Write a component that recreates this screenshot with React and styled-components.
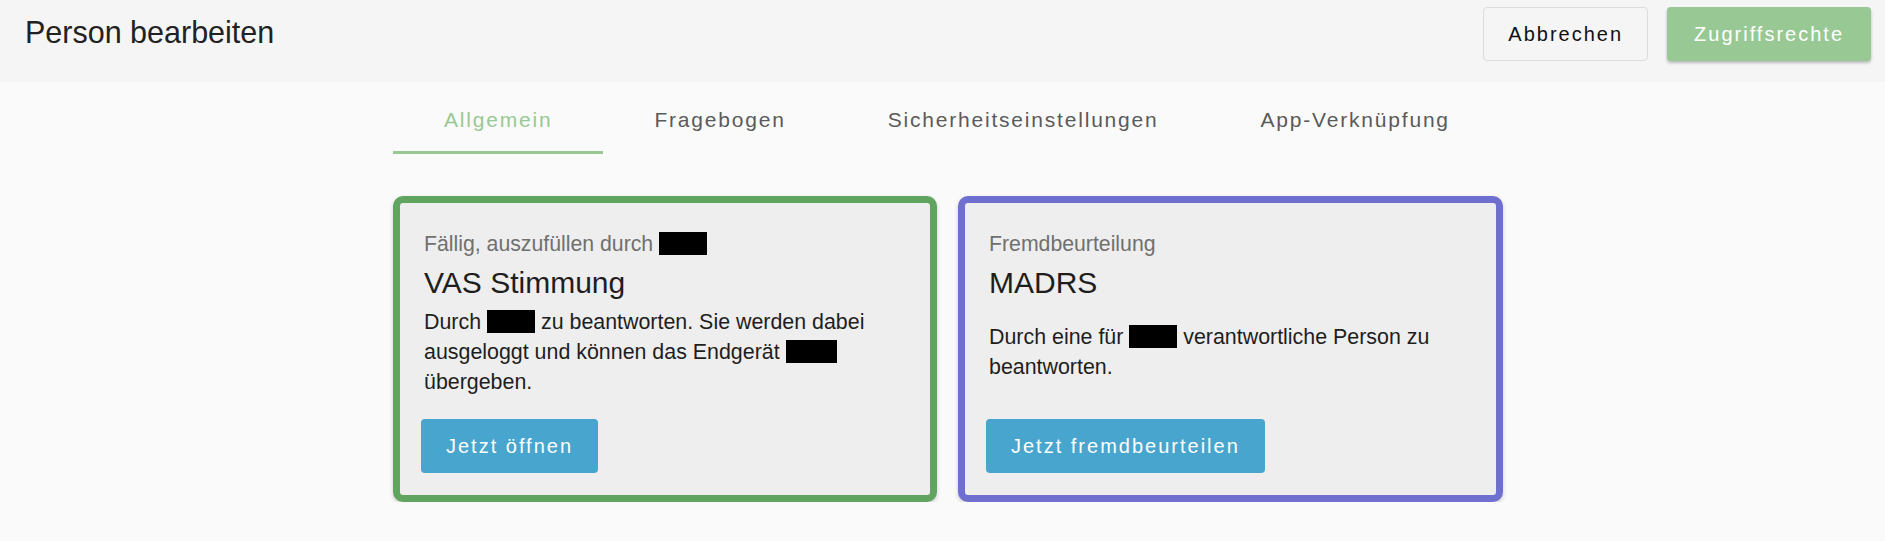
import React from 'react';
import styled, { createGlobalStyle } from 'styled-components';

const GlobalStyle = createGlobalStyle`
  html, body {
    margin: 0;
    padding: 0;
    background: #fafafa;
    font-family: "Liberation Sans", Arial, sans-serif;
    color: #222;
  }
`;

const Header = styled.header`
  height: 82px;
  background: #f5f5f5;
  display: flex;
  align-items: flex-start;
  justify-content: space-between;
  padding: 0 14px 0 25px;
  box-sizing: border-box;
`;

const Title = styled.h1`
  margin: 0;
  padding-top: 14px;
  font-size: 30.5px;
  line-height: 36px;
  font-weight: 400;
  color: #222;
`;

const Actions = styled.div`
  display: flex;
  gap: 19px;
  padding-top: 7px;
`;

const Button = styled.button`
  height: 54px;
  padding: 0 ${({ $pad }) => $pad || 28}px;
  border-radius: 4px;
  font-family: inherit;
  font-size: 20px;
  letter-spacing: 2px;
  cursor: pointer;
  border: 1px solid ${({ $variant }) => ($variant === 'ghost' ? '#dcdcdc' : 'transparent')};
  background: ${({ $variant }) =>
    $variant === 'ghost' ? '#f5f5f5' : $variant === 'green' ? '#98c994' : '#48a5cd'};
  color: ${({ $variant }) => ($variant === 'ghost' ? '#111' : '#fff')};
  box-shadow: ${({ $variant }) => ($variant === 'green' ? '0 2px 3px rgba(0,0,0,0.25)' : 'none')};
`;

const Main = styled.main`
  width: 1110px;
  margin-left: 393px;
`;

const Tabs = styled.nav`
  display: flex;
`;

const Tab = styled.div`
  padding: 26px 51px 19px;
  font-size: 21px;
  line-height: 24px;
  letter-spacing: 1.8px;
  color: ${({ $active }) => ($active ? '#98c994' : '#5a5a5a')};
  border-bottom: 3px solid ${({ $active }) => ($active ? '#98c994' : 'transparent')};
  white-space: nowrap;
`;

const Cards = styled.div`
  display: grid;
  grid-template-columns: 544px 545px;
  gap: 21px;
  margin-top: 42px;
`;

const Card = styled.section`
  border: 7px solid ${({ $accent }) => $accent};
  border-radius: 10px;
  background: #eeeeee;
  box-shadow: 0 2px 4px rgba(0, 0, 0, 0.18);
  padding: 26px 21px 22px 21px;
  display: flex;
  flex-direction: column;
  align-items: flex-start;
  height: 306px;
  box-sizing: border-box;
`;

const Label = styled.div`
  font-size: 21.25px;
  line-height: 30px;
  color: #707070;
  padding-left: 3px;
`;

const CardTitle = styled.h2`
  margin: 6px 0 0;
  padding-left: 3px;
  font-size: 30px;
  line-height: 36px;
  font-weight: 400;
  color: #1e1e1e;
`;

const Body = styled.p`
  margin: ${({ $gap }) => $gap}px 0 0;
  padding-left: 3px;
  font-size: 21.4px;
  line-height: 30px;
  color: #1e1e1e;
`;

const Redacted = styled.span`
  display: inline-block;
  width: ${({ $w }) => $w || 48}px;
  height: 23px;
  background: #000;
  vertical-align: -4px;
`;

const CardButton = styled(Button)`
  margin-top: auto;
`;

export default function App() {
  return (
    <>
      <GlobalStyle />
      <Header>
        <Title>Person bearbeiten</Title>
        <Actions>
          <Button $variant="ghost" $pad={24}>Abbrechen</Button>
          <Button $variant="green" $pad={26}>Zugriffsrechte</Button>
        </Actions>
      </Header>
      <Main>
        <Tabs>
          <Tab $active>Allgemein</Tab>
          <Tab>Fragebogen</Tab>
          <Tab>Sicherheitseinstellungen</Tab>
          <Tab>App-Verknüpfung</Tab>
        </Tabs>
        <Cards>
          <Card $accent="#5fa55f">
            <Label>
              Fällig, auszufüllen durch <Redacted />
            </Label>
            <CardTitle>VAS Stimmung</CardTitle>
            <Body $gap={6}>
              Durch <Redacted /> zu beantworten. Sie werden dabei ausgeloggt und können das Endgerät{' '}
              <Redacted $w={51} /> übergeben.
            </Body>
            <CardButton $pad={24}>Jetzt öffnen</CardButton>
          </Card>
          <Card $accent="#6f6fcf">
            <Label>Fremdbeurteilung</Label>
            <CardTitle>MADRS</CardTitle>
            <Body $gap={21}>
              Durch eine für <Redacted /> verantwortliche Person zu beantworten.
            </Body>
            <CardButton $pad={24}>Jetzt fremdbeurteilen</CardButton>
          </Card>
        </Cards>
      </Main>
    </>
  );
}
